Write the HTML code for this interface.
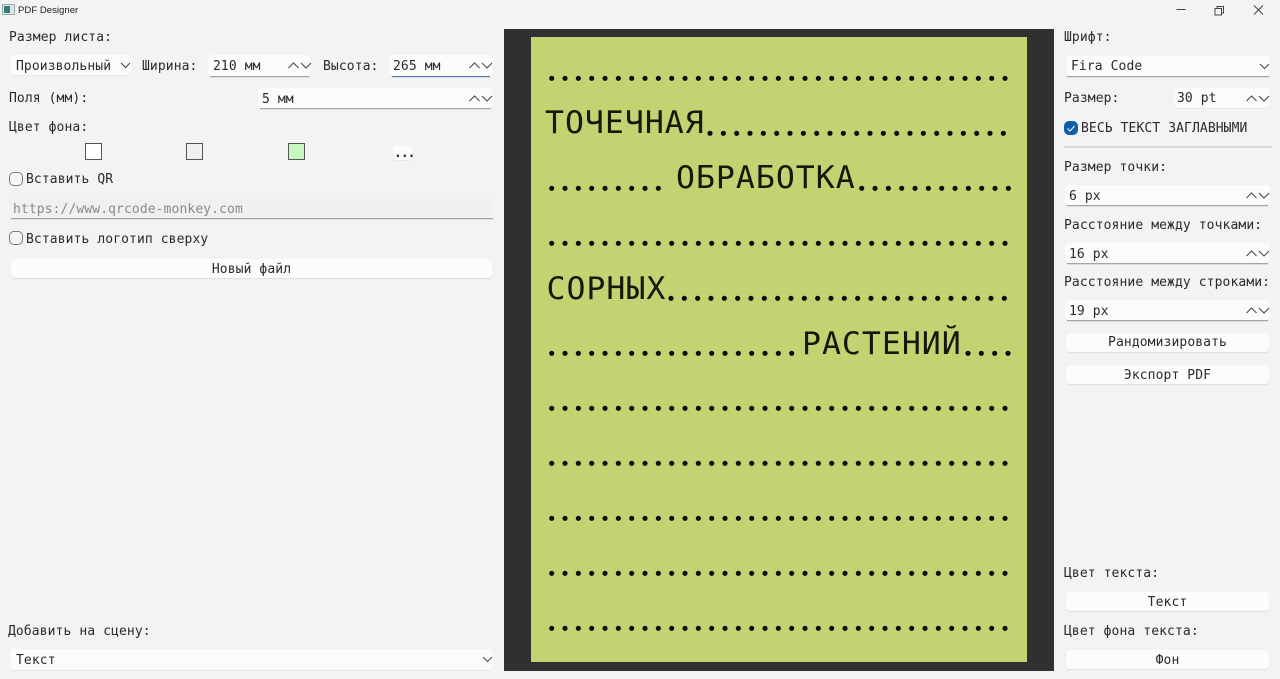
<!DOCTYPE html>
<html lang="ru"><head><meta charset="utf-8"><title>PDF Designer</title>
<style>
html,body{margin:0;padding:0;background:#f3f3f3}
#r{position:relative;width:1280px;height:679px;overflow:hidden;background:#f3f3f3;font-family:"DejaVu Sans Mono","Liberation Mono",monospace;font-size:13px;color:#2a2a2a}
#r div,#r svg{position:absolute}
.t{line-height:16px;height:16px;white-space:pre;letter-spacing:.1px}
.f{background:#fbfbfb;border-radius:4px;box-shadow:0 1px 0 #e8e8e8}
.l{height:1px;background:#a4a4a4;box-shadow:0 1px 0 #dedede}
.b{background:#fcfcfc;border-radius:4px;box-shadow:0 1px 1px #dcdcdc;text-align:center;line-height:19px;white-space:pre;letter-spacing:.1px}
.c{width:12px;height:12px;border:1px solid #7a7a7a;border-radius:5px;background:#f6f6f6}
.s{border:1px solid #555;box-sizing:border-box}
.h{font-size:31.5px;line-height:36px;height:36px;letter-spacing:1px;color:#14190a;white-space:pre}
svg path{fill:none;stroke:#444;stroke-width:1}
svg line{stroke:#0d0d0d;stroke-width:5.2;stroke-linecap:round;stroke-dasharray:0 13.333}
</style></head><body><div id="r">
<!-- title bar -->
<svg style="left:2px;top:4px" width="13" height="11"><rect x=".5" y=".5" width="12" height="10" fill="#dfe6e6" stroke="#9aa" stroke-width="1"/><rect x="2" y="2" width="6" height="7" fill="#2f7f78"/></svg>
<div class="t" style="left:18px;top:3px;font:9.6px/16px 'Liberation Sans',sans-serif;letter-spacing:0;color:#222">PDF Designer</div>
<svg style="left:1170px;top:3px" width="100" height="14"><path d="M6.500 6.500H15.500"/><path d="M45 5.500h6.500v6.500h-6.500z M47 5.500v-2h6.500v6.500h-2"/><path d="M84 2.500l9 9M93 2.500l-9 9"/></svg>

<!-- left panel -->
<div class="t" style="left:9px;top:30px">Размер листа:</div>
<div class="f" style="left:10px;top:55px;width:121px;height:20px"></div>
<div class="t" style="left:16px;top:59px">Произвольный</div>
<svg style="left:120px;top:61px" width="11" height="9"><path d="M1 2l4.500 4.500L10 2"/></svg>
<div class="t" style="left:142px;top:59px">Ширина:</div>
<div class="f" style="left:208px;top:55px;width:103px;height:21px"></div>
<div class="l" style="left:210px;top:76px;width:99px"></div>
<div class="t" style="left:213px;top:59px">210 мм</div>
<svg style="left:287px;top:60px" width="25" height="11"><path d="M1.500 8l5-5 5 5M14 3l5 5 5-5"/></svg>
<div class="t" style="left:323px;top:59px">Высота:</div>
<div class="f" style="left:389px;top:55px;width:104px;height:21px"></div>
<div class="l" style="left:392px;top:76px;width:98px;background:#4a7fc0"></div>
<div class="t" style="left:393px;top:59px">265 мм</div>
<svg style="left:468px;top:60px" width="25" height="11"><path d="M1.500 8l5-5 5 5M14 3l5 5 5-5"/></svg>
<div class="t" style="left:9px;top:91px">Поля (мм):</div>
<div class="f" style="left:258px;top:88px;width:235px;height:20px"></div>
<div class="l" style="left:260px;top:108px;width:231px"></div>
<div class="t" style="left:262px;top:92px">5 мм</div>
<svg style="left:468px;top:93px" width="25" height="11"><path d="M1.500 8l5-5 5 5M14 3l5 5 5-5"/></svg>
<div class="t" style="left:9px;top:120px">Цвет фона:</div>
<div class="s" style="left:85px;top:143px;width:17px;height:17px;background:#fff"></div>
<div class="s" style="left:186px;top:143px;width:17px;height:17px;background:#f0f0f0"></div>
<div class="s" style="left:288px;top:143px;width:17px;height:17px;background:#c8f8c0"></div>
<div class="f" style="left:393px;top:146px;width:19px;height:14px;border-radius:3px"></div>
<div class="t" style="left:394px;top:146px;font-weight:bold;width:17px;text-align:center;letter-spacing:-1px">...</div>
<div class="c" style="left:9px;top:172px"></div>
<div class="t" style="left:26px;top:172px">Вставить QR</div>
<div style="left:10px;top:199px;width:484px;height:19px;background:#f0f0f0;border-radius:4px"></div>
<div class="l" style="left:11px;top:218px;width:482px"></div>
<div class="t" style="left:13px;top:202px;color:#8a8a8a">https://www.qrcode-monkey.com</div>
<div class="c" style="left:9px;top:231px"></div>
<div class="t" style="left:26px;top:232px">Вставить логотип сверху</div>
<div class="b" style="left:11px;top:259px;width:481px;height:19px;line-height:21px">Новый файл</div>
<div class="t" style="left:8px;top:624px">Добавить на сцену:</div>
<div class="f" style="left:10px;top:649px;width:483px;height:21px"></div>
<div class="t" style="left:16px;top:653px">Текст</div>
<svg style="left:482px;top:655px" width="11" height="9"><path d="M1 2l4.500 4.500L10 2"/></svg>

<!-- canvas -->
<div style="left:504px;top:29px;width:550px;height:642px;background:#303030"></div>
<div style="left:531px;top:37px;width:496px;height:624.500px;background:#c2d372"></div>
<svg style="left:0;top:0" width="1280" height="679">
<line x1="551.700" y1="78.300" x2="1006" y2="78.300"/>
<line x1="710" y1="133.300" x2="1004.300" y2="133.300"/>
<line x1="551.700" y1="188.300" x2="659" y2="188.300"/>
<line x1="861.700" y1="188.300" x2="1009.300" y2="188.300"/>
<line x1="551.700" y1="243.300" x2="1006" y2="243.300"/>
<line x1="671" y1="298.300" x2="1005.300" y2="298.300"/>
<line x1="551.700" y1="353.300" x2="792" y2="353.300"/>
<line x1="968" y1="353.300" x2="1009" y2="353.300"/>
<line x1="551.700" y1="408.300" x2="1006" y2="408.300"/>
<line x1="551.700" y1="463.300" x2="1006" y2="463.300"/>
<line x1="551.700" y1="518.300" x2="1006" y2="518.300"/>
<line x1="551.700" y1="573.300" x2="1006" y2="573.300"/>
<line x1="551.700" y1="628.300" x2="1006" y2="628.300"/>
</svg>
<div class="h" style="left:545px;top:105px">ТОЧЕЧНАЯ</div>
<div class="h" style="left:676px;top:160px">ОБРАБОТКА</div>
<div class="h" style="left:546.500px;top:271px">СОРНЫХ</div>
<div class="h" style="left:802px;top:326px">РАСТЕНИЙ</div>

<!-- right panel -->
<div class="t" style="left:1064px;top:30px">Шрифт:</div>
<div class="f" style="left:1066px;top:56px;width:204px;height:20px"></div>
<div class="l" style="left:1067px;top:76px;width:202px"></div>
<div class="t" style="left:1071px;top:59px">Fira Code</div>
<svg style="left:1259px;top:62px" width="11" height="9"><path d="M1 2l4.500 4.500L10 2"/></svg>
<div class="t" style="left:1064px;top:91px">Размер:</div>
<div class="f" style="left:1174px;top:88px;width:96px;height:20px"></div>
<div class="t" style="left:1177px;top:91px">30 pt</div>
<svg style="left:1245px;top:93px" width="25" height="11"><path d="M1.500 8l5-5 5 5M14 3l5 5 5-5"/></svg>
<div class="c" style="left:1064px;top:121px;width:14px;height:14px;border:0;background:#0f5ea8"></div>
<svg style="left:1064px;top:121px" width="14" height="14"><path d="M3.500 7.500l2.500 2.500 4.500-5" style="stroke:#fff"/></svg>
<div class="t" style="left:1081px;top:121px">ВЕСЬ ТЕКСТ ЗАГЛАВНЫМИ</div>
<div style="left:1064px;top:146px;width:208px;height:2px;background:#d8d8d8"></div>
<div class="t" style="left:1064px;top:160px">Размер точки:</div>
<div class="f" style="left:1065px;top:185px;width:205px;height:20px"></div>
<div class="l" style="left:1067px;top:205px;width:201px"></div>
<div class="t" style="left:1069px;top:189px">6 px</div>
<svg style="left:1245px;top:190px" width="25" height="11"><path d="M1.500 8l5-5 5 5M14 3l5 5 5-5"/></svg>
<div class="t" style="left:1064px;top:218px">Расстояние между точками:</div>
<div class="f" style="left:1065px;top:243px;width:205px;height:20px"></div>
<div class="l" style="left:1067px;top:263px;width:201px"></div>
<div class="t" style="left:1069px;top:247px">16 px</div>
<svg style="left:1245px;top:248px" width="25" height="11"><path d="M1.500 8l5-5 5 5M14 3l5 5 5-5"/></svg>
<div class="t" style="left:1064px;top:275px">Расстояние между строками:</div>
<div class="f" style="left:1065px;top:300px;width:205px;height:20px"></div>
<div class="l" style="left:1067px;top:320px;width:201px"></div>
<div class="t" style="left:1069px;top:304px">19 px</div>
<svg style="left:1245px;top:305px" width="25" height="11"><path d="M1.500 8l5-5 5 5M14 3l5 5 5-5"/></svg>
<div class="b" style="left:1066px;top:333px;width:203px;height:19px">Рандомизировать</div>
<div class="b" style="left:1066px;top:365px;width:203px;height:19px;line-height:21px">Экспорт PDF</div>
<div class="t" style="left:1064px;top:566px">Цвет текста:</div>
<div class="b" style="left:1066px;top:592px;width:203px;height:19px;line-height:21px">Текст</div>
<div class="t" style="left:1064px;top:624px">Цвет фона текста:</div>
<div class="b" style="left:1066px;top:650px;width:203px;height:19px;line-height:21px">Фон</div>
</div></body></html>
